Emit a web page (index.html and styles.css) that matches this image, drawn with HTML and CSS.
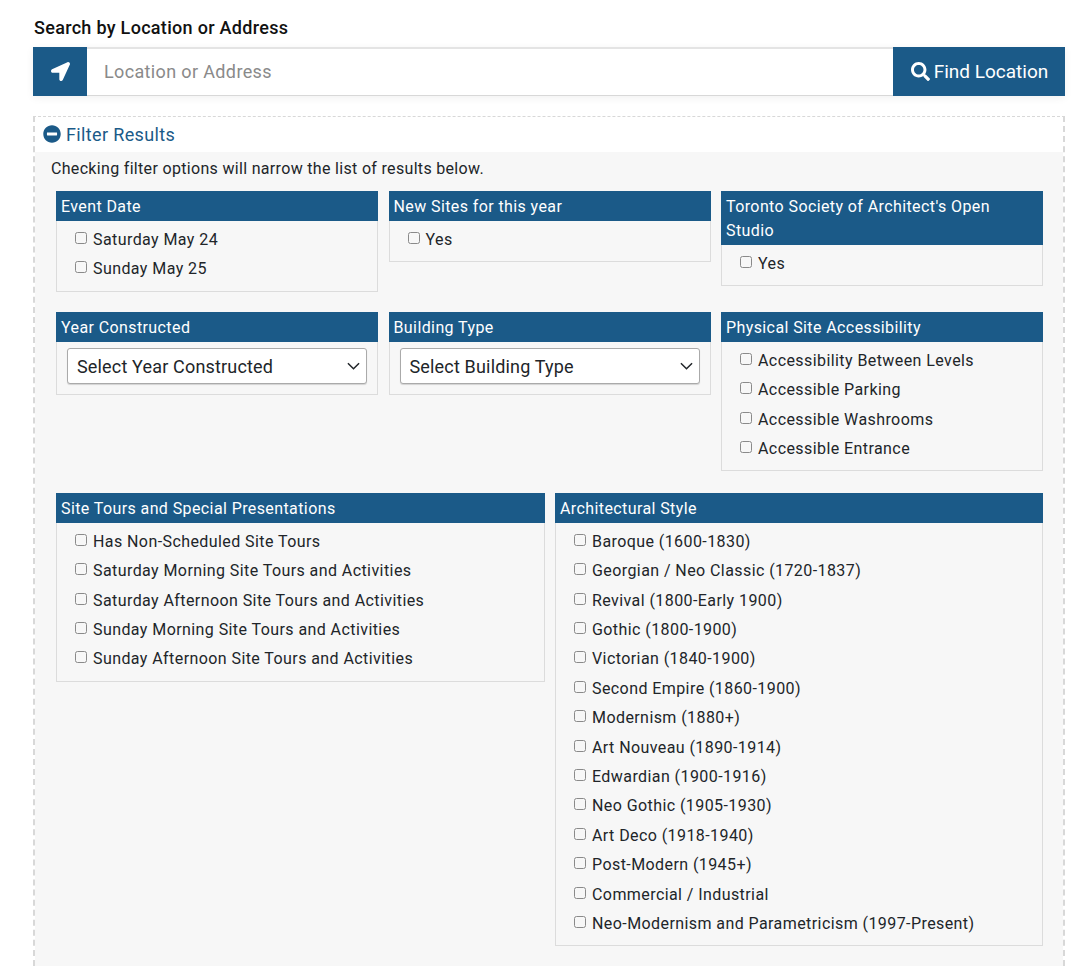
FILE: index.html
```html
<!DOCTYPE html>
<html lang="en">
<head>
<meta charset="utf-8">
<title>Search</title>
<link rel="stylesheet" href="styles.css">
</head>
<body>
<h1 class="search-label">Search by Location or Address</h1>
<div class="search-bar">
  <button class="locate" type="button" aria-label="Use my location">
    <svg class="icon-arrow" viewBox="0 0 512 512"><path fill="currentColor" d="M444.52 3.52 28.74 195.42c-47.97 22.39-31.98 92.75 19.19 92.75h175.91v175.91c0 51.17 70.36 67.17 92.75 19.19l191.9-415.78c15.99-38.39-25.59-79.97-63.97-63.97z"/></svg>
  </button>
  <div class="search-input">Location or Address</div>
  <button class="find" type="button">
    <svg class="icon-search" viewBox="0 0 512 512"><path fill="currentColor" d="M505 442.7 405.3 343c-4.5-4.5-10.6-7-17-7H372c27.6-35.3 44-79.7 44-128C416 93.1 322.9 0 208 0S0 93.1 0 208s93.1 208 208 208c48.3 0 92.7-16.4 128-44v16.3c0 6.4 2.5 12.5 7 17l99.7 99.7c9.4 9.4 24.6 9.4 33.9 0l28.3-28.3c9.4-9.4 9.4-24.6.1-34zM208 336c-70.7 0-128-57.2-128-128 0-70.7 57.2-128 128-128 70.7 0 128 57.2 128 128 0 70.7-57.2 128-128 128z"/></svg>
    <span>Find Location</span>
  </button>
</div>
<section class="filter">
  <header class="filter-head">
    <svg class="icon-minus" viewBox="0 0 512 512"><path fill="currentColor" d="M256 8C119 8 8 119 8 256s111 248 248 248 248-111 248-248S393 8 256 8zM124 296c-6.600 0-12-5.400-12-12v-56c0-6.600 5.400-12 12-12h264c6.600 0 12 5.400 12 12v56c0 6.600-5.400 12-12 12H124z"/></svg>
    <span>Filter Results</span>
  </header>
  <div class="filter-body">
    <p class="hint">Checking filter options will narrow the list of results below.</p>
    <div class="row three">
      <div class="panel">
        <h2>Event Date</h2>
        <div class="opts">
          <label><input type="checkbox">Saturday May 24</label>
          <label><input type="checkbox">Sunday May 25</label>
        </div>
      </div>
      <div class="panel">
        <h2>New Sites for this year</h2>
        <div class="opts">
          <label><input type="checkbox">Yes</label>
        </div>
      </div>
      <div class="panel">
        <h2>Toronto Society of Architect's Open Studio</h2>
        <div class="opts">
          <label><input type="checkbox">Yes</label>
        </div>
      </div>
    </div>
    <div class="row three">
      <div class="panel">
        <h2>Year Constructed</h2>
        <div class="sel-wrap">
          <select><option>Select Year Constructed</option></select>
          <svg class="chev" viewBox="0 0 14 8"><path d="M1 1l6 6 6-6" fill="none" stroke="currentColor" stroke-width="1.6"/></svg>
        </div>
      </div>
      <div class="panel">
        <h2>Building Type</h2>
        <div class="sel-wrap">
          <select><option>Select Building Type</option></select>
          <svg class="chev" viewBox="0 0 14 8"><path d="M1 1l6 6 6-6" fill="none" stroke="currentColor" stroke-width="1.6"/></svg>
        </div>
      </div>
      <div class="panel">
        <h2>Physical Site Accessibility</h2>
        <div class="opts">
          <label><input type="checkbox">Accessibility Between Levels</label>
          <label><input type="checkbox">Accessible Parking</label>
          <label><input type="checkbox">Accessible Washrooms</label>
          <label><input type="checkbox">Accessible Entrance</label>
        </div>
      </div>
    </div>
    <div class="row two">
      <div class="panel">
        <h2>Site Tours and Special Presentations</h2>
        <div class="opts">
          <label><input type="checkbox">Has Non-Scheduled Site Tours</label>
          <label><input type="checkbox">Saturday Morning Site Tours and Activities</label>
          <label><input type="checkbox">Saturday Afternoon Site Tours and Activities</label>
          <label><input type="checkbox">Sunday Morning Site Tours and Activities</label>
          <label><input type="checkbox">Sunday Afternoon Site Tours and Activities</label>
        </div>
      </div>
      <div class="panel">
        <h2>Architectural Style</h2>
        <div class="opts">
          <label><input type="checkbox">Baroque (1600-1830)</label>
          <label><input type="checkbox">Georgian / Neo Classic (1720-1837)</label>
          <label><input type="checkbox">Revival (1800-Early 1900)</label>
          <label><input type="checkbox">Gothic (1800-1900)</label>
          <label><input type="checkbox">Victorian (1840-1900)</label>
          <label><input type="checkbox">Second Empire (1860-1900)</label>
          <label><input type="checkbox">Modernism (1880+)</label>
          <label><input type="checkbox">Art Nouveau (1890-1914)</label>
          <label><input type="checkbox">Edwardian (1900-1916)</label>
          <label><input type="checkbox">Neo Gothic (1905-1930)</label>
          <label><input type="checkbox">Art Deco (1918-1940)</label>
          <label><input type="checkbox">Post-Modern (1945+)</label>
          <label><input type="checkbox">Commercial / Industrial</label>
          <label><input type="checkbox">Neo-Modernism and Parametricism (1997-Present)</label>
        </div>
      </div>
    </div>
  </div>
</section>
</body>
</html>
```
FILE: styles.css
```css
* { box-sizing: border-box; }
html, body { height: 966px; overflow: hidden; }
body {
  margin: 0;
  padding: 18px 15px 0 33px;
  background: #fff;
  font-family: Roboto, "Liberation Sans", sans-serif;
  color: #212529;
  font-size: 16px;
  letter-spacing: .42px;
}
.search-label {
  margin: 0 0 9px 1px;
  font-size: 18px;
  line-height: 20px;
  font-weight: 500;
  letter-spacing: .3px;
  color: #111;
}
.search-bar {
  display: flex;
  height: 49px;
  box-shadow: 0 2px 8px rgba(0,0,0,.06);
}
.locate, .find {
  border: 0;
  background: #1b5a88;
  color: #fff;
  font: inherit;
  display: flex;
  align-items: center;
  justify-content: center;
}
.locate { width: 54px; flex: none; padding: 0; }
.icon-arrow { width: 19px; height: 19px; }
.search-input {
  flex: 1;
  border-top: 2px solid #e4e4e4;
  border-bottom: 1px solid #d8d8d8;
  padding: 0 0 2px 17px;
  display: flex;
  align-items: center;
  font-size: 18px;
  letter-spacing: .36px;
  color: #8a8a8a;
}
.find {
  width: 172px;
  flex: none;
  gap: 4px;
  padding: 0 0 0 1px;
  font-size: 19px;
  letter-spacing: 0;
}
.icon-search { width: 19px; height: 19px; }
.filter {
  margin-top: 20px;
  height: 860px;
  border: 1px dashed #d8d8d8;
  border-left-width: 2px;
  border-right-width: 2px;
  border-bottom: 0;
  display: flex;
  flex-direction: column;
}
.filter-head {
  height: 35px;
  flex: none;
  display: flex;
  align-items: center;
  gap: 5px;
  padding: 0 0 1px 8px;
  color: #1b5a88;
  font-size: 18px;
  letter-spacing: .36px;
}
.icon-minus { width: 18px; height: 18px; }
.filter-body {
  flex: 1;
  background: #f7f7f7;
  padding: 7px 20px 0 21px;
}
.hint {
  margin: 0 0 12px -5px;
  font-size: 16px;
  line-height: 20px;
  letter-spacing: .32px;
}
.row { display: grid; column-gap: 10.5px; align-items: start; margin-bottom: 20px; }
.three { grid-template-columns: repeat(3, 322px); }
.two { grid-template-columns: 489px 488px; column-gap: 10px; margin-top: 21.5px; }
.three + .three { margin-bottom: 0; }
.panel { border: 1px solid #dcdcdc; border-top: 0; }
.panel h2 {
  margin: 0 -1px;
  padding: 4px 5px 2px;
  min-height: 30px;
  background: #1b5a88;
  color: #fff;
  font-size: 16px;
  font-weight: 400;
  line-height: 24px;
  letter-spacing: .4px;
}
.opts { padding: 4px 18px 7px; }
.opts label {
  display: flex;
  align-items: flex-start;
  height: 29.4px;
  line-height: 29px;
  font-size: 16px;
}
.opts input {
  appearance: none;
  width: 12px;
  height: 12px;
  margin: 7px 6px 0 0;
  flex: none;
  border: 1px solid #8a8a8a;
  border-radius: 2.5px;
  background: transparent;
}
.sel-wrap { position: relative; padding: 6px 10px 10px; }
.sel-wrap select {
  appearance: none;
  display: block;
  width: 100%;
  height: 36px;
  padding: 1px 9px 0;
  border: 1px solid #aaa;
  border-radius: 3px;
  background: #fff;
  color: #212529;
  font: 18px Roboto, "Liberation Sans", sans-serif;
  letter-spacing: .17px;
  box-shadow: 0 1px 1px rgba(0,0,0,.15);
}
.chev {
  position: absolute;
  right: 17px;
  top: 20px;
  width: 13px;
  height: 8px;
  color: #212529;
  pointer-events: none;
}
```
